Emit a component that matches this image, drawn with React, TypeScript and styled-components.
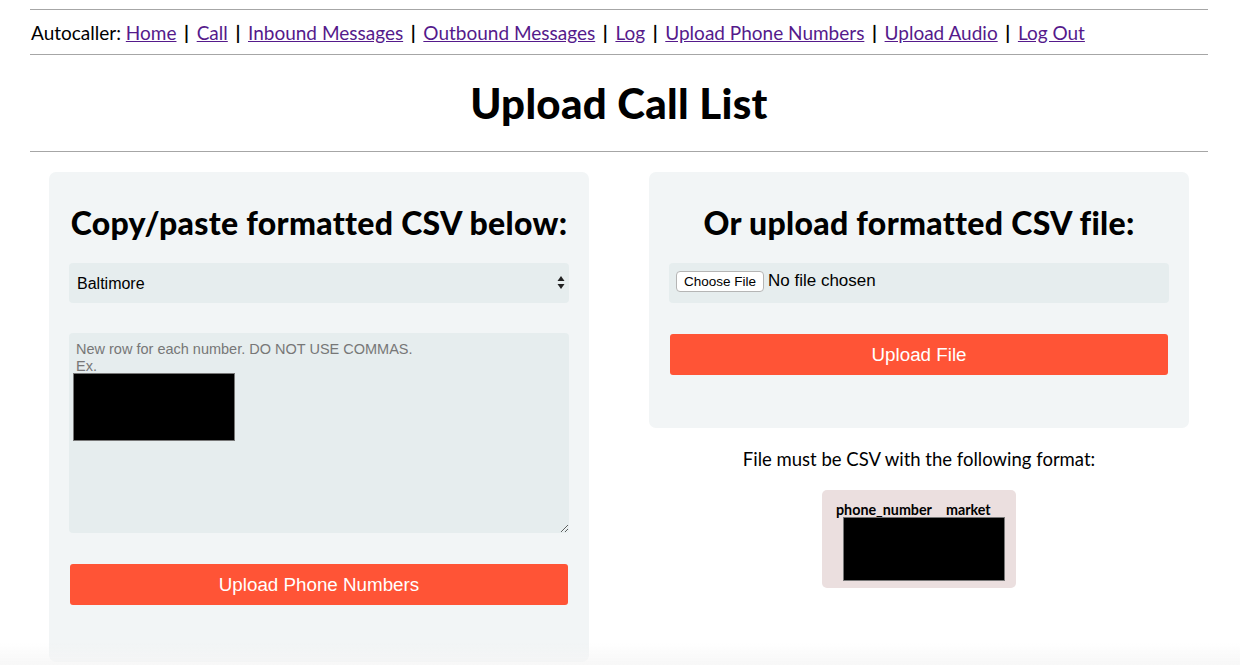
import React from "react";
import styled, { createGlobalStyle } from "styled-components";

const Global = createGlobalStyle`
  html, body { margin: 0; padding: 0; background: #fff; }
  body { font-family: "Lato", "Noto Sans", sans-serif; color: #000; }
  * { box-sizing: border-box; }
`;

const Page = styled.div`
  width: 1178px;
  margin: 0 auto 0 30px;
  padding-top: 9px;
`;

const Nav = styled.nav`
  height: 46px;
  border-top: 1px solid #a6a6a6;
  border-bottom: 1px solid #a6a6a6;
  display: flex;
  align-items: center;
  padding-left: 1px;
  font-size: 19px;
  white-space: pre;
`;

const NavLink = styled.a`
  color: #551a8b;
  text-decoration: underline;
`;

const Sep = styled.span`
  margin: 0 3px;
  font-weight: 700;
`;

const TitleBar = styled.header`
  height: 97px;
  border-bottom: 1px solid #a6a6a6;
  display: flex;
  align-items: center;
  justify-content: center;
`;

const Title = styled.h1`
  margin: 0;
  font-size: 42px;
  font-weight: 900;
  letter-spacing: 0.3px;
`;

const Columns = styled.main`
  display: grid;
  grid-template-columns: 540px 540px;
  column-gap: 60px;
  justify-content: center;
  padding-top: 20px;
  align-items: start;
`;

const Column = styled.section`
  display: flex;
  flex-direction: column;
  align-items: center;
`;

const Card = styled.div<{ $pb: number }>`
  width: 540px;
  background: #f2f5f6;
  border-radius: 7px;
  padding: 33px 20px ${(p) => p.$pb}px;
  display: flex;
  flex-direction: column;
  align-self: stretch;
`;

const CardHeading = styled.h2`
  margin: 0 0 22px;
  text-align: center;
  font-size: 32px;
  font-weight: 900;
  line-height: 36px;
  letter-spacing: 0.3px;
`;

const SelectWrap = styled.div`
  position: relative;
  height: 40px;
`;

const Select = styled.select`
  appearance: none;
  width: 100%;
  height: 40px;
  border: none;
  border-radius: 4px;
  background: #e6edee;
  font-family: "Liberation Sans", Arial, sans-serif;
  font-size: 16px;
  color: #000;
  padding: 0 8px;
`;

const SelectArrows = styled.svg`
  position: absolute;
  right: 4px;
  top: 12px;
  pointer-events: none;
`;

const AreaWrap = styled.div`
  position: relative;
  margin-top: 30px;
`;

const TextArea = styled.textarea`
  display: block;
  width: 100%;
  height: 200px;
  border: none;
  border-radius: 4px;
  background: #e6edee;
  font-family: "Liberation Sans", Arial, sans-serif;
  font-size: 14.5px;
  line-height: 17px;
  padding: 8px 7px;
  &::placeholder { color: #777; }
`;

const Redacted = styled.div<{ $w: number; $h: number }>`
  width: ${(p) => p.$w}px;
  height: ${(p) => p.$h}px;
  background: #000;
  border: 1px solid #777;
`;

const FormatSample = styled(Redacted)`
  margin-left: 7px;
`;

const AreaRedaction = styled.div`
  position: absolute;
  left: 4px;
  top: 40px;
`;

const OrangeButton = styled.button<{ $mt: number }>`
  margin: ${(p) => p.$mt}px 1px 0;
  height: 41px;
  border: none;
  border-radius: 3px;
  background: #ff5436;
  color: #fff;
  font-family: "Liberation Sans", Arial, sans-serif;
  font-size: 18.8px;
`;

const FileRow = styled.div`
  height: 40px;
  border-radius: 4px;
  background: #e6edee;
  display: flex;
  align-items: center;
  gap: 4px;
  padding: 0 7px;
  font-family: "Liberation Sans", Arial, sans-serif;
  font-size: 17px;
`;

const ChooseButton = styled.button`
  height: 21px;
  width: 88px;
  padding: 0;
  margin-top: -3px;
  background: #fff;
  border: 1px solid #b5b5b5;
  border-radius: 4px;
  font-family: "Liberation Sans", Arial, sans-serif;
  font-size: 13.5px;
  color: #000;
`;

const FileLabel = styled.span`
  margin-top: -4px;
`;

const FormatNote = styled.p`
  margin: 20px 0 0;
  font-size: 18.5px;
  text-align: center;
`;

const FormatBox = styled.div`
  margin-top: 20px;
  width: 194px;
  height: 98px;
  background: #ebdfdf;
  border-radius: 5px;
  display: flex;
  flex-direction: column;
  align-items: flex-start;
  padding: 12px 0 0 14px;
`;

const FormatHeader = styled.div`
  display: flex;
  gap: 14px;
  font-size: 14.3px;
  font-weight: 700;
  line-height: 15px;
`;

const BottomFade = styled.div`
  position: fixed;
  left: 0;
  right: 0;
  bottom: 0;
  height: 22px;
  background: linear-gradient(rgba(245,245,245,0), rgba(245,245,245,0.8));
  pointer-events: none;
`;

const links = [
  "Home",
  "Call",
  "Inbound Messages",
  "Outbound Messages",
  "Log",
  "Upload Phone Numbers",
  "Upload Audio",
  "Log Out",
];

export default function App() {
  return (
    <>
      <Global />
      <Page>
        <Nav>
          {"Autocaller: "}
          {links.map((l, i) => (
            <React.Fragment key={l}>
              <NavLink href="#">{l}</NavLink>
              {i < links.length - 1 ? <Sep> | </Sep> : null}
            </React.Fragment>
          ))}
        </Nav>
        <TitleBar>
          <Title>Upload Call List</Title>
        </TitleBar>
        <Columns>
          <Column>
            <Card $pb={57}>
              <CardHeading>Copy/paste formatted CSV below:</CardHeading>
              <SelectWrap>
                <Select defaultValue="Baltimore">
                  <option>Baltimore</option>
                </Select>
                <SelectArrows width="8" height="15" viewBox="0 0 8 15">
                  <path d="M4 1 L7.5 6 L0.5 6 Z" fill="#222" />
                  <path d="M4 14 L7.5 9 L0.5 9 Z" fill="#222" />
                </SelectArrows>
              </SelectWrap>
              <AreaWrap>
                <TextArea placeholder={"New row for each number. DO NOT USE COMMAS.\nEx."} />
                <AreaRedaction>
                  <Redacted $w={162} $h={68} />
                </AreaRedaction>
              </AreaWrap>
              <OrangeButton $mt={31}>Upload Phone Numbers</OrangeButton>
            </Card>
          </Column>
          <Column>
            <Card $pb={53}>
              <CardHeading>Or upload formatted CSV file:</CardHeading>
              <FileRow>
                <ChooseButton>Choose File</ChooseButton>
                <FileLabel>No file chosen</FileLabel>
              </FileRow>
              <OrangeButton $mt={31}>Upload File</OrangeButton>
            </Card>
            <FormatNote>File must be CSV with the following format:</FormatNote>
            <FormatBox>
              <FormatHeader>
                <span>phone_number</span>
                <span>market</span>
              </FormatHeader>
              <FormatSample $w={162} $h={64} />
            </FormatBox>
          </Column>
        </Columns>
      </Page>
      <BottomFade />
    </>
  );
}
